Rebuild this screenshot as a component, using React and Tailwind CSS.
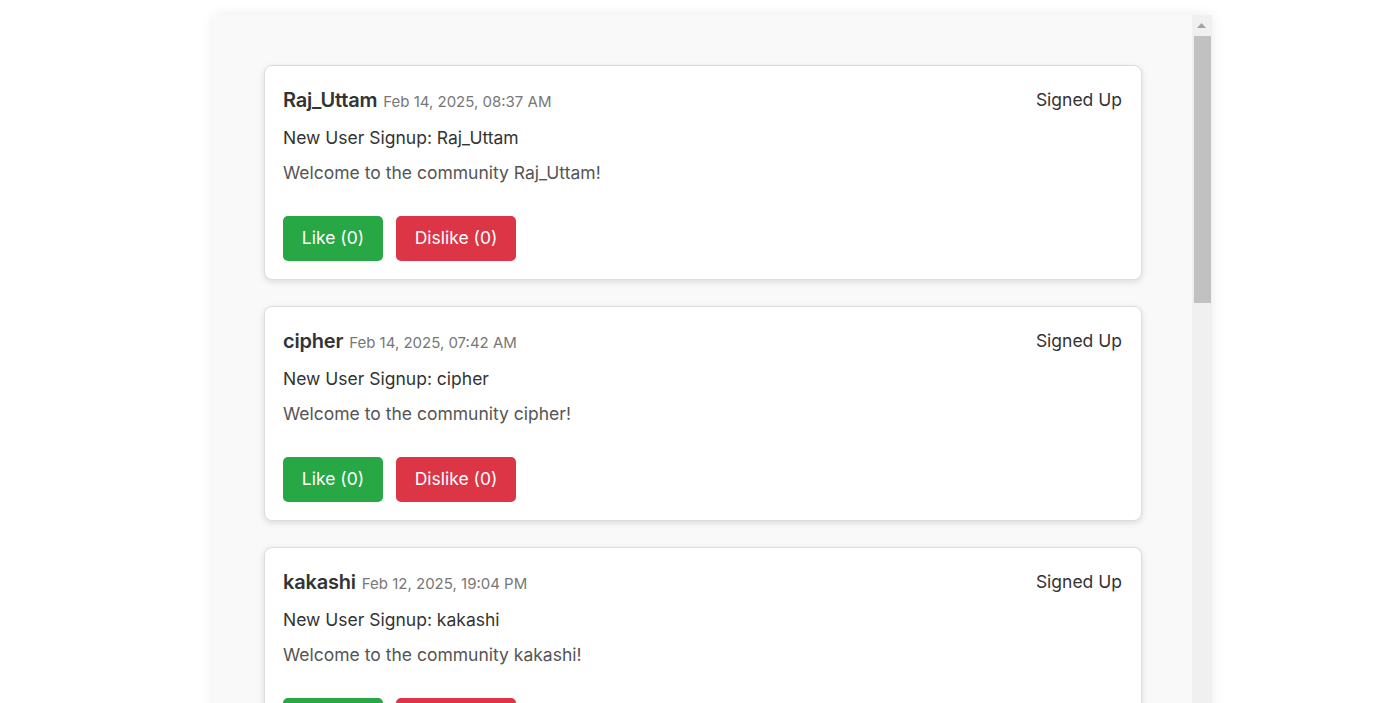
import React from "react";

const posts = [
  { user: "Raj_Uttam", date: "Feb 14, 2025, 08:37 AM" },
  { user: "cipher", date: "Feb 14, 2025, 07:42 AM" },
  { user: "kakashi", date: "Feb 12, 2025, 19:04 PM" },
];

function Card({ user, date }) {
  return (
    <div className="shrink-0 bg-white border border-[#dddddd] rounded-[8px] shadow-[0_2px_6px_rgba(0,0,0,0.12)] pt-[20px] pb-[18px] pl-[18px] pr-[19px]">
      <div className="flex items-start justify-between h-[27px]">
        <div className="flex items-baseline gap-[6px]">
          <span className="text-[20px] leading-[28px] font-semibold text-[#333333] tracking-[-0.2px]">{user}</span>
          <span className="text-[15px] leading-[28px] text-[#777777]">{date}</span>
        </div>
        <span className="text-[17.5px] text-[#333333] leading-[28px]">Signed Up</span>
      </div>
      <div className="mt-[13px] text-[17.5px] text-[#333333] leading-[24px]">New User Signup: {user}</div>
      <div className="mt-[11px] text-[17.5px] text-[#555555] leading-[24px]">Welcome to the community {user}!</div>
      <div className="mt-[31px] flex gap-[13px]">
        <button className="w-[100px] h-[45px] rounded-[5px] bg-[#28a745] text-white text-[17.5px]">Like (0)</button>
        <button className="w-[120px] h-[45px] rounded-[5px] bg-[#dc3545] text-white text-[17.5px]">Dislike (0)</button>
      </div>
    </div>
  );
}

function Scrollbar() {
  return (
    <div className="w-[20px] shrink-0 bg-[#f0f0f0] flex flex-col">
      <div className="h-[21px] flex items-center justify-center">
        <svg width="9" height="5" viewBox="0 0 9 5" className="mr-[1px]">
          <polygon points="4.5,0 9,5 0,5" fill="#a3a3a3" />
        </svg>
      </div>
      <div className="h-[267px] ml-[2px] mr-[1px] bg-[#c1c1c1]" />
    </div>
  );
}

export default function App() {
  return (
    <div className="h-[703px] overflow-hidden bg-white" style={{ fontFamily: "Inter, 'Noto Sans', sans-serif" }}>
      <div className="ml-[213px] mt-[15px] w-[999px] h-[700px] flex bg-[#f9f9f9] shadow-[0_0_12px_rgba(0,0,0,0.08)]">
        <div className="flex-1 overflow-hidden pt-[50px] pl-[51px] pr-[50px] flex flex-col gap-[26px]">
          {posts.map((p) => (
            <Card key={p.user} {...p} />
          ))}
        </div>
        <Scrollbar />
      </div>
    </div>
  );
}
